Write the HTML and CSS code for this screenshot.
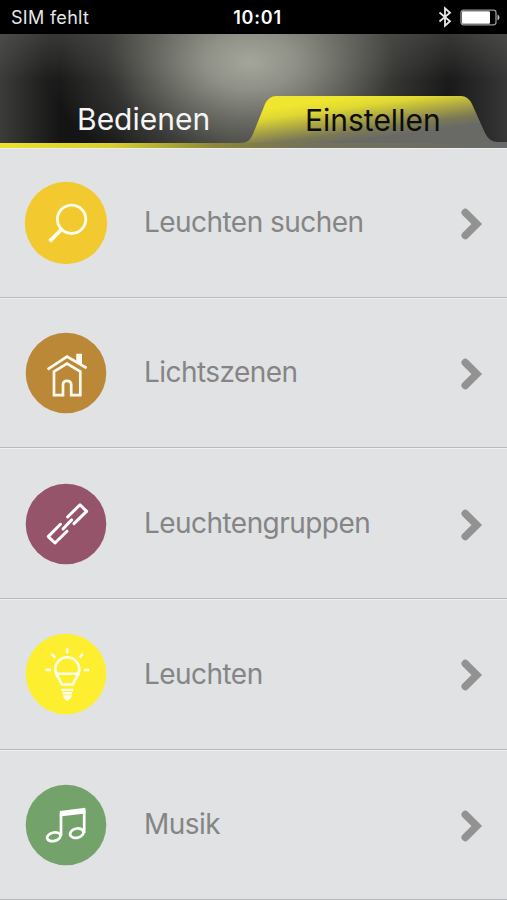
FILE: index.html
```html
<!DOCTYPE html>
<html lang="de">
<head>
  <meta charset="UTF-8">
  <meta name="viewport" content="width=device-width, initial-scale=1.0">
  <title>Einstellen</title>
  <link rel="stylesheet" href="styles.css">
</head>
<body>
  <!-- Statusleiste -->
  <div class="statusbar">
    <span class="carrier">SIM fehlt</span>
    <span class="clock">10:01</span>
    <span class="indicators">
      <svg class="bluetooth" width="14" height="22" viewBox="0 0 14 22">
        <path d="M1.5 6.5L12 15.2L7 19.7V2.3L12 6.8L1.5 15.5" fill="none" stroke="#e8e8e8" stroke-width="1.8"/>
      </svg>
      <svg class="battery" width="40" height="17" viewBox="0 0 40 17">
        <rect x="1" y="1.2" width="35" height="14.6" rx="2.5" fill="none" stroke="#9a9a9a" stroke-width="1.3"/>
        <rect x="2" y="2.3" width="28" height="12.4" rx="1" fill="#fff"/>
        <path d="M37.5 5.5q2 1 2 3t-2 3z" fill="#bbb"/>
      </svg>
    </span>
  </div>

  <!-- Kopfbereich mit Tabs -->
  <header class="header">
    <svg class="tab-shape" width="507" height="54" viewBox="0 0 507 54">
      <defs>
        <linearGradient id="tabFill" gradientUnits="userSpaceOnUse" x1="345" y1="4" x2="351" y2="48">
          <stop offset="0" stop-color="#efe62f"/>
          <stop offset="0.22" stop-color="#e0d833"/>
          <stop offset="0.48" stop-color="#b0aa42"/>
          <stop offset="0.78" stop-color="#7b7856"/>
          <stop offset="1" stop-color="#696966"/>
        </linearGradient>
        <linearGradient id="lineFill" x1="0" x2="1" y1="0" y2="0">
          <stop offset="0" stop-color="#ece22c"/>
          <stop offset="0.22" stop-color="#d8cf2e"/>
          <stop offset="0.42" stop-color="#8e8938"/>
          <stop offset="0.5" stop-color="#807c45"/>
          <stop offset="0.6" stop-color="#74725a"/>
          <stop offset="1" stop-color="#696969"/>
        </linearGradient>
      </defs>
      <path d="M240 49C248 49 250 46 253 40L265 10Q269 2 276 2H461Q468 2 472 10L485 39Q489 48 498 48H507V50H240Z" fill="url(#tabFill)"/>
      <rect x="0" y="49" width="507" height="5" fill="url(#lineFill)"/>
    </svg>
    <a class="tab tab-left">Bedienen</a>
    <a class="tab tab-right">Einstellen</a>
  </header>

  <!-- Menü -->
  <main class="menu">
    <div class="row">
      <svg class="icon" viewBox="0 0 84 84">
        <circle cx="42" cy="42" r="41.2" fill="#f2ca30"/>
        <g fill="none" stroke="#fffdf0" stroke-width="2.8">
          <circle cx="47.6" cy="38.3" r="14.2"/>
          <path d="M38 48L25.6 60.3" stroke-width="3.8"/>
        </g>
      </svg>
      <span class="label">Leuchten suchen</span>
      <svg class="chevron" viewBox="0 0 24 34"><path d="M5.2 5.5L16.8 17L5.2 28.5"/></svg>
    </div>
    <div class="row">
      <svg class="icon" viewBox="0 0 84 84">
        <circle cx="42" cy="42" r="40.3" fill="#ba8837"/>
        <g fill="none" stroke="#fffaf0" stroke-width="2.7">
          <path d="M23.6 38.4L43 25.7L62.6 37"/>
          <path d="M30 64.2V40.6L43 32.6L56.3 40.6V64.2H47.2V54Q47.2 49.8 43 49.8Q39 49.8 39 54V64.2Z"/>
        </g>
        <path d="M52.2 22.8H58V34.6L52.2 31.3Z" fill="#fffaf0"/>
      </svg>
      <span class="label">Lichtszenen</span>
      <svg class="chevron" viewBox="0 0 24 34"><path d="M5.2 5.5L16.8 17L5.2 28.5"/></svg>
    </div>
    <div class="row">
      <svg class="icon" viewBox="0 0 84 84">
        <circle cx="42" cy="42" r="40.3" fill="#955469"/>
        <g fill="none" stroke="#fff" stroke-width="3" stroke-linecap="round" stroke-linejoin="round">
          <path d="M43.6 35L56 22.8L62.6 29.4L50 41.6"/>
          <path d="M36.5 42.3L24.2 54.6L31 61L43 49.2"/>
          <path d="M39 47L47.6 37.9"/>
        </g>
      </svg>
      <span class="label">Leuchtengruppen</span>
      <svg class="chevron" viewBox="0 0 24 34"><path d="M5.2 5.5L16.8 17L5.2 28.5"/></svg>
    </div>
    <div class="row">
      <svg class="icon" viewBox="0 0 84 84">
        <circle cx="42" cy="42" r="40.3" fill="#fdee30"/>
        <g fill="none" stroke="#fffee8" stroke-width="2.6">
          <path d="M37.8 52.5L35 46.5Q31.3 42 31.3 37.3A12 12 0 0 1 55.3 37.3Q55.3 42 51.8 46.5L48.8 52.5Z"/>
          <path d="M32 41.8H54.6M37.5 58H49M38.7 61.3H48"/>
          <path d="M43.2 16.3V21.3M21.5 37.9H27M59.8 38H65.3M27.7 21.9L31.3 25.8M58.9 21.9L55.6 25.5"/>
        </g>
        <path d="M38.7 63.2H48L46.4 66.6L43.3 69L40.2 66.6Z" fill="#fffee8"/>
      </svg>
      <span class="label">Leuchten</span>
      <svg class="chevron" viewBox="0 0 24 34"><path d="M5.2 5.5L16.8 17L5.2 28.5"/></svg>
    </div>
    <div class="row">
      <svg class="icon" viewBox="0 0 84 84">
        <circle cx="42" cy="42" r="40.3" fill="#73a36b"/>
        <g fill="none" stroke="#fff" stroke-width="2.7">
          <ellipse cx="29.8" cy="53.8" rx="6.8" ry="4.2" transform="rotate(-14 29.8 53.8)"/>
          <ellipse cx="52.8" cy="50.2" rx="6.8" ry="4.6" transform="rotate(-14 52.8 50.2)"/>
          <path d="M37 53V30M60.2 50V27"/>
        </g>
        <path d="M35.8 28L61.4 24.8V30.4L35.8 33.4Z" fill="#fff"/>
      </svg>
      <span class="label">Musik</span>
      <svg class="chevron" viewBox="0 0 24 34"><path d="M5.2 5.5L16.8 17L5.2 28.5"/></svg>
    </div>
  </main>
</body>
</html>
```
FILE: styles.css
```css
body {
  margin: 0;
  width: 507px;
  height: 900px;
  overflow: hidden;
  background: #e1e2e4;
  font-family: Inter, 'Liberation Sans', sans-serif;
}

/* Statusleiste */
.statusbar {
  display: grid;
  grid-template-columns: 1fr auto 1fr;
  align-items: center;
  box-sizing: border-box;
  height: 34px;
  padding: 0 7px 0 11px;
  background: #000;
  color: #e6e6e6;
  font-size: 18px;
}

.carrier {
  letter-spacing: 0.3px;
}

.clock {
  margin-left: 4px;
  color: #fff;
  font-weight: 600;
  letter-spacing: 0.8px;
}

.indicators {
  display: flex;
  justify-content: flex-end;
  align-items: center;
  gap: 8px;
}

/* Kopfbereich */
.header {
  display: grid;
  grid-template-columns: 253px 254px;
  align-items: end;
  position: relative;
  height: 114px;
  background:
    radial-gradient(ellipse 205px 125px at 250px 28px, rgba(164,165,155,1) 0%, rgba(152,153,143,0.9) 22%, rgba(128,129,120,0.7) 45%, rgba(95,95,90,0.4) 70%, rgba(60,60,58,0) 100%),
    linear-gradient(180deg, rgba(100,100,97,0.4) 0%, rgba(60,60,60,0) 40%),
    linear-gradient(90deg, #3c3c3a 0%, #141414 12%, #161616 24%, #3c3c3a 46%, #3a3a38 60%, #1c1c1b 78%, #181818 88%, #363636 100%);
}

.tab-shape {
  position: absolute;
  left: 0;
  bottom: 0;
}

.tab {
  position: relative;
  height: 50px;
  font-size: 30px;
  line-height: 42px;
}

.tab-left {
  padding-left: 77px;
  color: #f5f5f5;
}

.tab-right {
  padding-left: 52px;
  color: #0c0c08;
  line-height: 45px;
}

/* Menüzeilen */
.row {
  display: flex;
  align-items: center;
  box-sizing: border-box;
  height: 150.7px;
  padding: 0 23px 0 24px;
  border-top: 1px solid #efeff1;
  border-bottom: 1px solid #b9babd;
}

.row:first-child {
  height: 149.5px;
}

.icon {
  width: 84px;
  height: 84px;
}

.label {
  flex: 1;
  margin-left: 36px;
  padding-bottom: 1px;
  color: #858585;
  font-size: 28px;
  line-height: 34px;
  letter-spacing: -0.55px;
}

.chevron {
  width: 24px;
  height: 34px;
  padding-top: 2px;
}

.chevron path {
  fill: none;
  stroke: #929292;
  stroke-width: 7.4;
  stroke-linecap: round;
}
```
